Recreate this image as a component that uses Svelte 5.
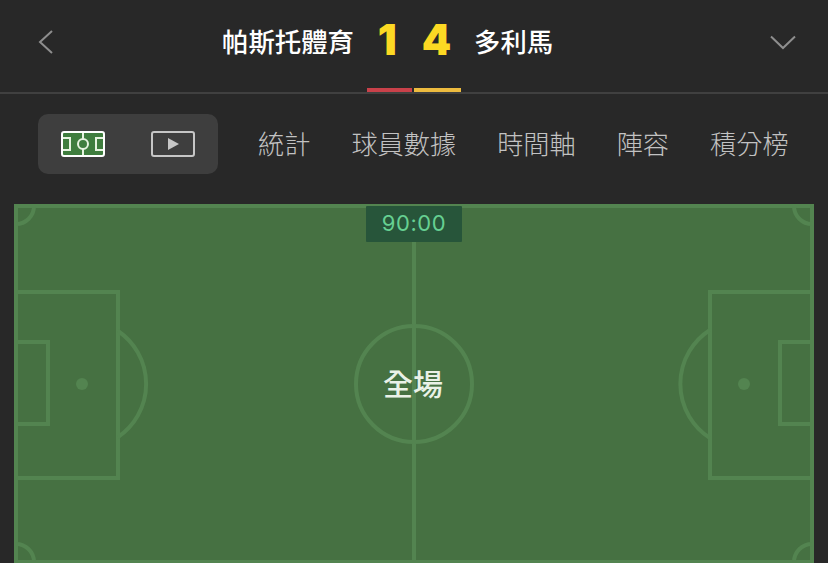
<script lang="ts">
	const tabs = ['統計', '球員數據', '時間軸', '陣容', '積分榜'];
</script>

<main>
	<header>
		<div class="match">
			<button class="nav" aria-label="back">
				<svg width="16" height="26" viewBox="0 0 16 26"><path d="M14 2 L2 13 L14 24" /></svg>
			</button>
			<span class="team home">帕斯托體育</span>
			<div class="score">
				<span>1</span>
				<span>4</span>
			</div>
			<span class="team away">多利馬</span>
			<button class="nav more" aria-label="more">
				<svg width="26" height="15" viewBox="0 0 26 15"><path d="M1 1.5 L13 13 L25 1.5" /></svg>
			</button>
		</div>
		<div class="bars">
			<i class="red"></i>
			<i class="yellow"></i>
		</div>
	</header>

	<nav>
		<div class="toggle">
			<svg width="44" height="26" viewBox="0 0 44 26">
				<rect x="1" y="1" width="42" height="24" rx="2" fill="#3f7d3e" stroke="#fff" stroke-width="2" />
				<path d="M2 7 H9 V19 H2 M42 7 H35 V19 H42 M22 2 V24" fill="none" stroke="#e6f3e0" stroke-width="2" />
				<circle cx="22" cy="13" r="5" fill="#3f7d3e" stroke="#e6f3e0" stroke-width="2" />
			</svg>
			<svg width="44" height="26" viewBox="0 0 44 26">
				<rect x="1" y="1" width="42" height="24" rx="2" fill="none" stroke="#c6c6c6" stroke-width="2" />
				<path d="M17 7 L28 13 L17 19 Z" fill="#c6c6c6" />
			</svg>
		</div>
		<ul>
			{#each tabs as tab}
				<li>{tab}</li>
			{/each}
		</ul>
	</nav>

	<section class="pitch">
		<svg width="800" height="360" viewBox="0 0 800 360">
			<rect width="800" height="360" fill="#467142" />
			<g fill="none" stroke="#538450" stroke-width="4">
				<rect x="2" y="2" width="796" height="356" />
				<path d="M400 2 V358" />
				<circle cx="400" cy="180" r="58" />
				<path d="M2 88 H104 V274 H2" />
				<path d="M2 138 H34 V220 H2" />
				<path d="M104 127 A64 64 0 0 1 104 233" />
				<path d="M798 88 H696 V274 H798" />
				<path d="M798 138 H766 V220 H798" />
				<path d="M696 126 A64 64 0 0 0 696 234" />
				<path d="M20 2 A18 18 0 0 1 2 20" />
				<path d="M780 2 A18 18 0 0 0 798 20" />
				<path d="M2 340 A18 18 0 0 1 20 358" />
				<path d="M798 340 A18 18 0 0 0 780 358" />
			</g>
			<circle cx="68" cy="180" r="6" fill="#538450" />
			<circle cx="730" cy="180" r="6" fill="#538450" />
		</svg>
		<div class="clock">90:00</div>
		<div class="period">全場</div>
	</section>
</main>

<style>
	:global(body) {
		margin: 0;
		background: #282828;
		overflow: hidden;
	}

	main {
		width: 828px;
		height: 563px;
		overflow: hidden;
		background: #282828;
		font-family: "Noto Sans CJK TC", "Noto Sans", sans-serif;
	}

	header {
		border-bottom: 2px solid #404040;
	}

	.match {
		display: grid;
		grid-template-columns: 1fr 120px 1fr;
		align-items: center;
		height: 84px;
		position: relative;
	}

	.nav {
		position: absolute;
		background: none;
		border: 0;
		padding: 0;
		display: flex;
	}

	.nav:first-child {
		left: 38px;
		top: 29px;
	}

	.nav.more {
		right: 32px;
		top: 35px;
	}

	.nav path {
		fill: none;
		stroke: #8e8e8e;
		stroke-width: 2;
	}

	.team {
		color: #fff;
		font-size: 26.4px;
		font-weight: 500;
		line-height: 36px;
		margin-top: -2px;
	}

	.home {
		text-align: right;
	}

	.score {
		display: flex;
		justify-content: center;
		gap: 25px;
		padding-left: 1px;
		color: #fcd923;
		font-family: Inter, sans-serif;
		font-size: 42px;
		font-weight: 900;
		line-height: 48px;
		margin-top: -5px;
	}

	.bars {
		display: flex;
		justify-content: center;
		gap: 2px;
		padding-top: 4px;
	}

	.bars i {
		display: block;
		height: 4px;
	}

	.red {
		width: 45px;
		background: #c9414a;
	}

	.yellow {
		width: 47px;
		background: #edbb3f;
	}

	nav {
		display: flex;
		align-items: center;
		gap: 40px;
		padding: 20px 0 30px 38px;
	}

	.toggle {
		display: flex;
		justify-content: space-between;
		align-items: center;
		box-sizing: border-box;
		width: 180px;
		height: 60px;
		padding: 0 23px;
		background: #3e3e3e;
		border-radius: 10px;
	}

	ul {
		display: flex;
		gap: 41px;
		margin: -2px 0 0;
		padding: 0;
		list-style: none;
	}

	li {
		color: #c2c2c2;
		font-size: 26.2px;
		font-weight: 300;
		line-height: 36px;
		white-space: nowrap;
	}

	.pitch {
		position: relative;
		width: 800px;
		margin-left: 14px;
	}

	.pitch svg {
		display: block;
	}

	.clock {
		position: absolute;
		left: 352px;
		top: 2px;
		width: 96px;
		height: 36px;
		border-radius: 1px;
		background: #27553a;
		color: #66d092;
		font-family: Inter, sans-serif;
		font-size: 22px;
		font-weight: 400;
		letter-spacing: 0.6px;
		line-height: 34px;
		text-align: center;
	}

	.period {
		position: absolute;
		left: 339px;
		top: 156px;
		width: 120px;
		color: #eaf1e7;
		font-size: 30px;
		font-weight: 500;
		line-height: 44px;
		text-align: center;
	}
</style>
